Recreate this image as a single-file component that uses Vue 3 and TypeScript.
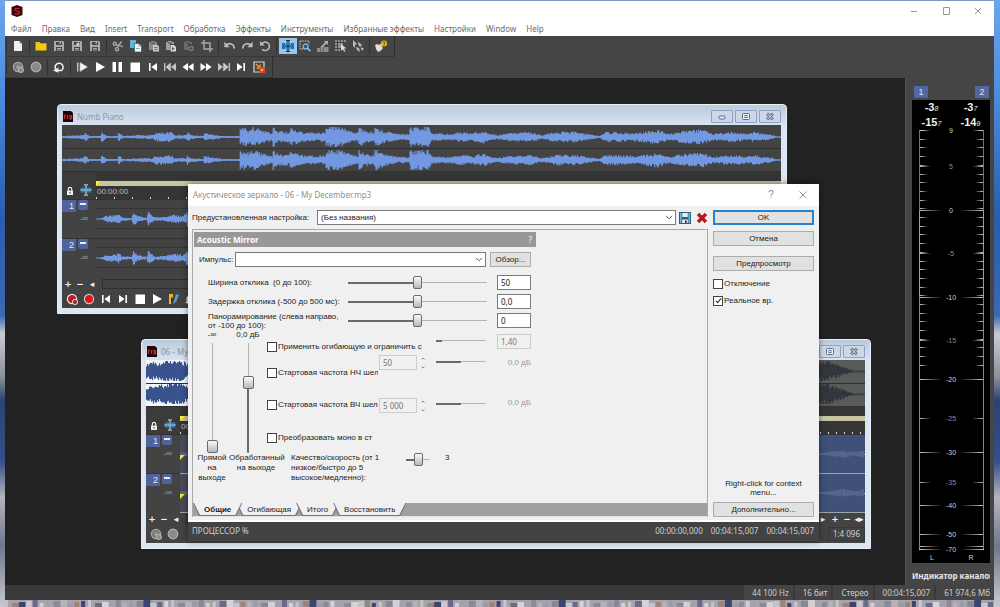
<script setup lang="ts">
import { reactive, ref } from 'vue'

type Point = [number, number]

const menu = ['Файл', 'Правка', 'Вид', 'Insert', 'Transport', 'Обработка', 'Эффекты', 'Инструменты', 'Избранные эффекты', 'Настройки', 'Window', 'Help']

const G = '#a9a9a9'
const W = '#f2f2f2'
const floppy = (c: string, extra = '') =>
  `<path fill="${c}" fill-rule="evenodd" d="M1 1h9l1 1v9H1zM3 2v3h6V2zM3 7v4h6V7z"/><path fill="${c}" d="M6.5 2h1.5v2H6.5zM4 8h4v1H4zM4 9.6h4v.8H4z"/>${extra}`
const clip = (c: string, extra: string) =>
  `<path fill="${c}" d="M1 2h2V1h4v1h2v2H5v6H1z" opacity=".7"/><path fill="#454545" d="M3 2.5h4v1H3z"/>${extra}`

const icons: Record<string, string> = {
  new: `<path fill="${W}" d="M2 1h5.5L10 3.5V11H2z"/><path fill="#8a8a8a" d="M7.5 1v2.5H10z"/>`,
  open: `<path fill="#f1cb0c" d="M.5 2h4l1 1.3h6V10.5H.5z"/><path fill="#c39d00" d="M.5 3.8h4.7l.8-.7h5.5v.8H.5z"/>`,
  save: floppy(G),
  saveAs: floppy(G, `<path fill="#dcdcdc" d="M5 4l3-1 1 1-3 2z"/>`),
  saveAll: floppy(G, `<path fill="${G}" d="M3 5h6v1H3z"/>`),
  cut: `<g fill="none" stroke="${G}" stroke-width="1.4"><circle cx="2.8" cy="3.8" r="1.6"/><circle cx="5" cy="9.2" r="1.6"/><path d="M4.2 4.6L11 6.6M5.2 7.6L9.5 1.5"/></g>`,
  copy: `<path fill="#5fb4dc" d="M0 0h6v8H0z"/><path fill="#f4f4f4" stroke="#3a3a3a" stroke-width=".6" d="M4.5 3.5h4.2l2.8 2.6V12h-7z"/><path fill="#5fb4dc" d="M6 8h3.5v1H6zM8.3 4.2v2.3h2.4z"/>`,
  paste: clip(G, `<path fill="#c9c9c9" d="M5 4.5h4l2 2V11.5H5z"/><path fill="#555" d="M6.2 7h3.5v.8H6.2zM6.2 9h3.5v.8H6.2z"/>`),
  pasteNew: clip('#c8c8c8', `<path fill="#d8d8d8" d="M5.5 5h3.5l2 2v4.5H5.5z"/><path fill="#555" d="M7 7l2.5 1.5L7 10.5z"/>`),
  pasteMix: clip('#7c7c7c', `<circle cx="8" cy="8.5" r="2.8" fill="#7c7c7c"/><path stroke="#454545" d="M8 6.8v3.4M6.3 8.5h3.4"/>`),
  crop: `<path fill="none" stroke="${G}" stroke-width="1.5" d="M3 0v9h9M0 3h9v9"/>`,
  undo: `<path fill="none" stroke="#bdbdbd" stroke-width="1.6" d="M2 5.2C5 2.6 10 3.2 10.4 8.6"/><path fill="#bdbdbd" d="M.4 1.8v5.4h5.3z"/>`,
  redo: `<path fill="none" stroke="#bdbdbd" stroke-width="1.6" d="M10 5.2C7 2.6 2 3.2 1.6 8.6"/><path fill="#bdbdbd" d="M11.6 1.8v5.4H6.3z"/>`,
  repeat: `<path fill="none" stroke="#bdbdbd" stroke-width="1.5" d="M2.6 4.2A4.2 4.2 0 1 1 3.2 9.2"/><path fill="#bdbdbd" d="M1 1v4.6h4.6z"/>`,
  edit: `<path fill="#1873b4" d="M0 3h3v6H0zM3.8 2.5h1v7h-1zM7.2 2.5h1v7h-1zM9 3h3v6H9z"/><path fill="#1873b4" d="M2 5h8v2.4H2z"/><path fill="none" stroke="#1b2d3c" stroke-width="1.1" d="M4 .6h1.4l.6.6.6-.6H8M6 1v10M4 11.4h1.4l.6-.6.6.6H8"/>`,
  zoom: `<path fill="none" stroke="#d2d2d2" stroke-width="1" stroke-dasharray="1.4 1" d="M1 1h9v3M1 1v8h3"/><circle cx="6.6" cy="6.4" r="2.5" fill="#3a5468" stroke="#7cc0ea" stroke-width="1.2"/><path stroke="#7cc0ea" stroke-width="1.8" d="M8.4 8.2l3 3"/>`,
  event: `<path fill="#8d8d8d" d="M0 8h3v4H0zM3.5 6h3v6h-3zM7 7h4.5v5H7z"/><path fill="#b0b0b0" d="M4 6.5L8.2 2.2 6.8 1H11v4L9.5 3.4 5.4 7.6z"/>`,
  select: `<path fill="#8f8f8f" d="M0 0h2v2H0zM3 0h2v2H3zM6 0h2v2H6zM9 0h2v2H9zM0 3h2v2H0zM0 6h2v2H0zM0 9h2v2H0zM3 9h2v2H3zM3 3h5v5H3z"/><path fill="#d8d8d8" d="M6 4l5.5 4.4-2.6.2 1.4 2.6-1.2.6-1.3-2.6L6 11z"/>`,
  pencil: `<path fill="#b9b9b9" d="M1 0l4 4-2 1v3L1 6zM6 1.5L10 5 8 7l-1.5-2zM4 7l3 1 1 4-3-2zM8.5 7.5L12 8l-2 3z"/>`,
  help: `<path fill="#e3e0d2" d="M0 5l2-1 2 1 3-2 1.5 1-2 2 1.5 2-2 2.5-3 1.5L1 9z"/><circle cx="9" cy="3.5" r="3" fill="#e9bf12"/><path fill="none" stroke="#5c4a00" d="M7.8 2.8C8 1.4 10.4 1.6 10 3l-1 1v.6M9 5.2v.8"/>`,
  recSet: `<circle cx="6" cy="6" r="4.6" fill="#777" stroke="#a9a9a9" stroke-width="1.3"/><circle cx="6" cy="6" r="2" fill="#999"/><circle cx="9" cy="9" r="2.6" fill="#8a8a8a" stroke="#c4c4c4" stroke-width=".8"/>`,
  rec: `<circle cx="6" cy="6" r="4.8" fill="#8a8a8a" stroke="#aeaeae" stroke-width="1.2"/>`,
  loop: `<path fill="none" stroke="${W}" stroke-width="1.5" d="M3 8.8A4 4 0 1 1 8.6 9.4H5"/><path fill="${W}" d="M0 9.4L5.4 6.4v5.4z"/>`,
  playAll: `<path fill="#bcbcbc" d="M1 1.5h1.5v9H1z"/><path fill="${W}" stroke="#bcbcbc" stroke-width=".6" d="M4 1.5L11.5 6 4 10.5z"/>`,
  play: `<path fill="#fff" d="M2 1l9 5-9 5z"/>`,
  pause: `<path fill="#fff" d="M1.5 1H5v10H1.5zM7.5 1H11v10H7.5z"/>`,
  stop: `<path fill="#fff" d="M1.5 1.5h9.5v9.5H1.5z"/>`,
  start: `<path fill="#fff" d="M2 2h1.6v8H2zM10 2v8L4.4 6z"/>`,
  prev: `<path fill="#c6c6c6" d="M0 2h1.3v8H0zM6 2v8L1.6 6zM6.2 2h.9v8h-.9zM12 2v8L7.2 6z"/>`,
  rew: `<path fill="#fff" d="M6 2v8L.5 6zM11.6 2v8L6 6z"/>`,
  fwd: `<path fill="#fff" d="M.5 2v8L6 6zM6 2v8l5.6-4z"/>`,
  next: `<path fill="#c6c6c6" d="M12 2h-1.3v8H12zM6 2v8l4.6-4zM5.8 2h-.9v8h.9zM0 2v8l4.8-4z"/>`,
  end: `<path fill="#fff" d="M10 2H8.4v8H10zM2 2v8l5.6-4z"/>`,
  script: `<path fill="none" stroke="#d8d8d8" stroke-width="1.2" d="M11 6V1H1v10h5"/><path fill="none" stroke="#e6a030" stroke-width="1.5" d="M3 3l4 4M7.2 3.6v3.6H3.600"/><path fill="#e04a22" d="M6 6h6v6H6z"/><path fill="#ffb080" d="M8 8h2v2H8z"/>`,
  recRedSet: `<circle cx="6" cy="6" r="4.6" fill="#c01c1c" stroke="#e8e8e8" stroke-width="1.2"/><circle cx="9" cy="9" r="2.6" fill="#9b2a2a" stroke="#ececec" stroke-width=".9"/>`,
  recRed: `<circle cx="6" cy="6" r="4.6" fill="#e01616" stroke="#c9c9c9" stroke-width="1.2"/>`,
  brush: `<path fill="#e8b92c" d="M1 1h4v2L3 11H1z"/><path fill="#5a9bd0" d="M8 1l3 1-3 7-3 2z"/><path fill="#2b2b2b" d="M3 4l2 2-2 5z"/>`
}

const fileTools = [
  { cls: 'n1', items: [['new', 'Новый']] },
  { cls: 'n4', items: [['open', 'Открыть'], ['save', 'Сохранить'], ['saveAs', 'Сохранить как'], ['saveAll', 'Сохранить все']] },
  { cls: 'n6', items: [['cut', 'Вырезать'], ['copy', 'Копировать'], ['paste', 'Вставить'], ['pasteNew', 'Вставить в новый'], ['pasteMix', 'Смешать'], ['crop', 'Обрезать']] },
  { cls: 'n3', items: [['undo', 'Отменить'], ['redo', 'Вернуть'], ['repeat', 'Повторить']] },
  { cls: 'n5', items: [['edit', 'Правка'], ['zoom', 'Масштаб'], ['event', 'События'], ['select', 'Выделение'], ['pencil', 'Карандаш']] },
  { cls: 'n1', items: [['help', 'Справка']] }
]
const playTools = [
  { cls: 'n2', items: [['recSet', 'Параметры записи'], ['rec', 'Запись']] },
  { cls: 'n1', items: [['loop', 'Цикл']] },
  { cls: 'n11', items: [['playAll', 'Воспроизвести всё'], ['play', 'Воспроизвести'], ['pause', 'Пауза'], ['stop', 'Стоп'], ['start', 'В начало'], ['prev', 'Предыдущий'], ['rew', 'Назад'], ['fwd', 'Вперёд'], ['next', 'Следующий'], ['end', 'В конец'], ['script', 'Сценарий']] }
]

function envelope(points: Point[], x: number): number {
  for (let i = 1; i < points.length; i++) {
    const [x1, y1] = points[i]
    if (x <= x1) {
      const [x0, y0] = points[i - 1]
      return y0 + ((y1 - y0) * (x - x0)) / Math.max(1, x1 - x0)
    }
  }
  return points[points.length - 1][1]
}
function wave(points: Point[], centre: number, seed: number, max = 10): string {
  let s = seed
  const rnd = () => (s = (s * 16807) % 2147483647) / 2147483647
  const width = points[points.length - 1][0]
  let d = ''
  for (let x = 0; x < width; x++) {
    const e = envelope(points, x)
    const up = Math.max(0.4, Math.min(max, e * (0.55 + 0.55 * rnd())))
    const down = Math.max(0.4, Math.min(max, e * (0.55 + 0.55 * rnd())))
    d += `M${x + 0.5} ${(centre - up).toFixed(1)}V${(centre + down).toFixed(1)}`
  }
  return d
}

const numb: Point[] = [
  [0, 1], [20, 2], [23, 4], [27, 1], [38, 1], [39, 5], [45, 1], [55, 1], [56, 5], [61, 1], [80, 2], [90, 2], [93, 4], [109, 5], [112, 2],
  [124, 2], [125, 5], [129, 2], [141, 1], [142, 4], [155, 2], [160, 1], [177, 1], [178, 9], [187, 8], [190, 10], [196, 8], [201, 6], [210, 4],
  [211, 11], [216, 6], [227, 5], [228, 9], [240, 5], [254, 4], [263, 5], [264, 9], [270, 11], [283, 8], [290, 5], [296, 5], [297, 10],
  [302, 6], [312, 5], [313, 11], [322, 6], [336, 3], [347, 3], [348, 9], [366, 10], [370, 4], [385, 3], [401, 5], [410, 4], [421, 6], [435, 2],
  [446, 4], [468, 5], [480, 2], [495, 5], [515, 5], [538, 1], [543, 5], [575, 4], [596, 7], [608, 3], [621, 6], [641, 7], [651, 3],
  [673, 5], [685, 3], [693, 5], [711, 2], [716, 0], [720, 0]
]
const numbTrack: Point[] = [
  [0, 0], [6, 1], [9, 3], [20, 4], [22, 6], [25, 2], [35, 1], [37, 7], [41, 3], [50, 1], [52, 7], [58, 2], [66, 2], [78, 4], [86, 3], [92, 8], [685, 6]
]
const december: Point[] = [[0, 8], [8, 10], [14, 8], [20, 12], [28, 12], [33, 12], [41, 7], [640, 11], [680, 11], [688, 8], [694, 6], [704, 2], [712, 0], [720, 0]]
const decemberTrack: Point[] = [[0, 2], [600, 2], [640, 1], [655, 3], [664, 4], [672, 2], [684, 4]]

const docs = [
  {
    id: 'numb', title: 'Numb Piano', time: '00:00:00', scale: '',
    overview: [wave(numb, 12, 71), wave(numb, 35, 913)],
    track: [wave(numbTrack, 19, 31), wave(numbTrack, 19, 77)],
    tools: ['recRedSet', 'recRed', 'start', 'end', 'stop', 'play', 'brush', 'loop']
  },
  {
    id: 'december', title: '06 - My December.mp3', time: '00:00:00', scale: '1:4 096',
    overview: [wave(december, 11, 51), wave(december, 34, 413)],
    track: [wave(decemberTrack, 19, 15, 8), wave(decemberTrack, 19, 99, 8)],
    tools: ['recSet', 'rec']
  }
]
const captions = [
  ['Свернуть', '<rect x="3" y="5" width="6" height="3" rx="1"/>'],
  ['Развернуть', '<rect x="2.500" y="2.500" width="7" height="6" rx="1"/><rect x="5" y="4.500" width="2" height="2"/>'],
  ['Закрыть', '<path d="M3 2.500L9 8.500M9 2.500L3 8.500" stroke-width="3"/><path d="M3 2.500L9 8.500M9 2.500L3 8.500" stroke="#e8eef6" stroke-width="1"/>']
]

const majors = [
  { label: '9', y: 30 }, { label: '5', y: 66 }, { label: '0', y: 110 }, { label: '-5', y: 153 }, { label: '-10', y: 197 }, { label: '-15', y: 240 },
  { label: '-20', y: 279 }, { label: '-25', y: 318 }, { label: '-30', y: 352 }, { label: '-35', y: 382 }, { label: '-40', y: 405 },
  { label: '-50', y: 434 }, { label: '-70', y: 449 }
]
const bright = ['0', '-10', '-20', '-30', '-40', '-50', '-70']
const minors = Array.from({ length: 28 }, (_, i) => Math.round(30 + i * 8.7))

const levels = reactive([
  { id: 'width', label: 'Ширина отклика  (0 до 100):', value: 50, min: 0, max: 100, text: '50' },
  { id: 'delay', label: 'Задержка отклика (-500 до 500 мс):', value: 0, min: -500, max: 500, text: '0,0' },
  { id: 'pan', label: 'Панорамирование (слева направо, от -100 до 100):', value: 0, min: -100, max: 100, text: '0' }
])
const shelves = reactive([
  { id: 'env', label: 'Применить огибающую и ограничить с', on: false, spin: '', fill: 12, out: '1,40' },
  { id: 'low', label: 'Стартовая частота НЧ шел', on: false, spin: '50', fill: 50, out: '0,0 дБ' },
  { id: 'high', label: 'Стартовая частота ВЧ шел', on: false, spin: '5 000', fill: 50, out: '0,0 дБ' },
  { id: 'mono', label: 'Преобразовать моно в ст', on: false, spin: '', fill: 0, out: '' }
])
const pct = (v: number, min: number, max: number) => ({ '--p': `${((v - min) / (max - min)) * 100}%` })
const dry = ref(0)
const wet = ref(66)
const quality = ref(3)
const bypass = ref(false)
const realtime = ref(true)
const tabs = ['Общие', 'Огибающая', 'Итого', 'Восстановить']
const tab = ref('Общие')
const status = ['44 100 Hz', '16 бит', 'Стерео', '00:04:15,007', '61 974,6 Мб']
const city = ['#c4c3ca', '#85879a', '#d4d3d9', '#9a9aa8', '#666c88', '#b6b2b6', '#cac8ce', '#8d8a96', '#3c4474', '#a3a1ad', '#9c8478', '#d2d0d4']
const blocks = Array.from({ length: 150 }, (_, i) => ({ x: i * 7, w: 3 + ((i * 5) % 6), c: city[(i * 7 + (i % 5) * 3) % city.length], h: (i * 3) % 4 }))
</script>

<template>
  <div class="desktop">
    <main class="app">
      <header class="titlebar">
        <svg class="logo" viewBox="0 0 12 12" aria-hidden="true">
          <path fill="#3a060b" d="M6 0l5.500 2v8L6 12 .5 10V2z" />
          <path fill="none" stroke="#c8202c" stroke-width="1.200" d="M8.500 3.500H4.500L3.500 5l5 2-1 1.800H3.500" />
        </svg>
        <div class="wincontrols">
          <button aria-label="Свернуть"><svg viewBox="0 0 8 8"><path d="M1 4.500h6" /></svg></button>
          <button aria-label="Развернуть"><svg viewBox="0 0 8 8"><path d="M1.500 .5h6v7h-6z" /></svg></button>
          <button aria-label="Закрыть"><svg viewBox="0 0 8 8"><path d="M1 1l6 6M7 1L1 7" /></svg></button>
        </div>
      </header>
      <nav class="menu">
        <button v-for="m in menu" :key="m">{{ m }}</button>
      </nav>
      <div class="toolbars">
        <div class="toolbar">
          <div v-for="(g, i) in fileTools" :key="i" class="group" :class="g.cls">
            <button v-for="t in g.items" :key="t[0]" :aria-label="t[1]" :class="{ on: t[0] === 'edit' }">
              <svg viewBox="0 0 12 12" v-html="icons[t[0]]"></svg>
            </button>
          </div>
        </div>
        <div class="toolbar">
          <div v-for="(g, i) in playTools" :key="i" class="group" :class="g.cls">
            <button v-for="t in g.items" :key="t[0]" :aria-label="t[1]">
              <svg viewBox="0 0 12 12" v-html="icons[t[0]]"></svg>
            </button>
          </div>
        </div>
      </div>

      <div class="middle">
        <div class="workspace">
          <section v-for="d in docs" :key="d.id" class="doc" :class="d.id">
            <div class="doc-title">
              <svg class="doc-icon" viewBox="0 0 10 11" aria-hidden="true">
                <path fill="#1c0608" d="M0 0h8l2 2v9H0z" />
                <path fill="none" stroke="#d02630" stroke-width="1.200" d="M1.500 8V3.500M1.500 4.500h1.500M4.500 8V4M4.500 5h1M7 4.500h1.500V8H7z" />
              </svg>
              <h2>{{ d.title }}</h2>
              <button v-for="c in captions" :key="c[0]" :aria-label="c[0]">
                <svg viewBox="0 0 12 11" v-html="c[1]"></svg>
              </button>
            </div>
            <div class="doc-body">
              <svg class="overview" viewBox="0 0 720 46" preserveAspectRatio="none" aria-hidden="true">
                <template v-if="d.id === 'december'">
                  <linearGradient id="played" gradientUnits="userSpaceOnUse" x1="0" x2="720" y1="0" y2="0">
                    <stop offset=".9" stop-color="#38538e" /><stop offset=".9" stop-color="#33363f" />
                  </linearGradient>
                  <rect width="648" height="46" fill="#f4f6fa" />
                  <rect x="648" width="72" height="46" fill="#595a5a" />
                </template>
                <path class="axis" d="M0 12h720M0 35h720" />
                <path v-for="(p, i) in d.overview" :key="i" class="wave" :d="p" />
                <path class="split" d="M0 23.500h720" />
              </svg>
              <div class="ruler-row">
                <div class="ruler-head">
                  <svg viewBox="0 0 8 10" class="lock" aria-hidden="true"><path fill="#f0f0f0" d="M1 4.500h6V9H1z" /><path fill="none" stroke="#f0f0f0" stroke-width="1.200" d="M2.300 4.500V3a1.700 1.700 0 0 1 3.400 0v1.500" /><path stroke="#333" d="M4 6v1.500" /></svg>
                  <svg viewBox="0 0 12 12" class="ibeam" aria-hidden="true"><path fill="#2b86b8" d="M1 3.500h4v5H1zM7 3.500h4v5H7z" /><path fill="none" stroke="#e0e0e0" d="M4 .8h1.400L6 1.400 6.600.8H8M6 1v10M4 11.200h1.400l.6-.6.6.6H8" /><path stroke="#8cc8e8" d="M0 6h12" /></svg>
                </div>
                <div class="ruler">
                  <div class="loopbar"><svg viewBox="0 0 5 5"><path fill="#ffee22" d="M0 0h5L0 5z" /></svg></div>
                  <span>{{ d.time }}</span>
                </div>
              </div>
              <div v-for="n in 2" :key="n" class="track">
                <div class="track-head">
                  <b>{{ n }}</b>
                  <button :aria-label="`Свернуть дорожку ${n}`"></button>
                  <span>-∞</span>
                </div>
                <svg viewBox="0 0 685 39" preserveAspectRatio="none" aria-hidden="true">
                  <rect v-if="d.id === 'december'" width="685" height="39" fill="#3f5079" />
                  <rect v-if="d.id === 'december'" width="60" height="39" fill="#474a5b" />
                  <path v-if="d.id === 'numb'" class="grid" d="M0 8.500h685M0 28.500h685" />
                  <path v-if="d.id === 'december'" class="edge" d="M0 19.500h685M0 38.500h685" />
                  <path class="wave" :d="d.track[n - 1]" />
                  <path v-if="d.id === 'december'" fill="#f5e72a" d="M0 20h5l-5 5z" />
                </svg>
              </div>
              <div class="scroll-row">
                <button aria-label="Крупнее">+</button>
                <button aria-label="Мельче">−</button>
                <button aria-label="Влево">◂</button>
                <div class="scroll-thumb"></div>
                <button aria-label="Вправо">▸</button>
                <button aria-label="Увеличить">+</button>
                <button aria-label="Уменьшить">−</button>
                <button aria-label="По ширине">◂▸</button>
              </div>
              <div class="doc-tools">
                <button v-for="t in d.tools" :key="t" :aria-label="t"><svg viewBox="0 0 12 12" v-html="icons[t]"></svg></button>
                <output v-if="d.scale">{{ d.scale }}</output>
              </div>
            </div>
          </section>
        </div>

        <aside class="meters">
          <div class="chan"><button>1</button><button>2</button></div>
          <div class="meter">
            <div class="peaks"><b>-3<i>8</i></b><b>-3<i>7</i></b></div>
            <div class="peaks"><b>-15<i>7</i></b><b>-14<i>9</i></b></div>
            <svg viewBox="0 30 78 433" class="scale">
              <defs>
                <linearGradient id="fadeL"><stop offset="0" stop-color="#cfcfcf" /><stop offset="1" stop-color="#cfcfcf" stop-opacity="0" /></linearGradient>
                <linearGradient id="fadeR"><stop offset="0" stop-color="#cfcfcf" stop-opacity="0" /><stop offset="1" stop-color="#cfcfcf" /></linearGradient>
              </defs>
              <g v-for="y in minors" :key="y">
                <rect x="8" :y="y" width="8" height="1" fill="url(#fadeL)" /><rect x="63" :y="y" width="8" height="1" fill="url(#fadeR)" />
              </g>
              <g v-for="m in majors" :key="m.label">
                <rect x="7" :y="m.y" :width="bright.includes(m.label) ? 24 : 12" height="1" fill="url(#fadeL)" />
                <rect :x="bright.includes(m.label) ? 48 : 60" :y="m.y" :width="bright.includes(m.label) ? 24 : 12" height="1" fill="url(#fadeR)" />
                <text x="39" :y="m.y + 3" :class="{ dim: !bright.includes(m.label) && m.label !== '9' }">{{ m.label }}</text>
              </g>
              <rect x="7" y="446" width="20" height="1" fill="url(#fadeL)" /><rect x="52" y="446" width="20" height="1" fill="url(#fadeR)" />
              <g fill="none">
                <path stroke="#b8555a" d="M7.500 30V110M71.500 30V110" />
                <path stroke="#b89a62" d="M7.500 110V197M71.500 110V197" />
                <path stroke="#5f9d78" d="M7.500 197V449M71.500 197V449" />
              </g>
              <text x="20" y="460">L</text><text x="59" y="460">R</text>
            </svg>
          </div>
          <h3>Индикатор каналов</h3>
        </aside>
      </div>

      <footer class="status"><span v-for="s in status" :key="s">{{ s }}</span></footer>
    </main>

    <svg class="city" viewBox="0 0 1000 7" preserveAspectRatio="none" aria-hidden="true">
      <rect width="1000" height="7" fill="#a5a4ad" />
      <rect v-for="b in blocks" :key="b.x" :x="b.x" :y="b.h" :width="b.w" height="7" :fill="b.c" />
    </svg>

    <section class="dialog" role="dialog" aria-label="Акустическое зеркало">
      <div class="dlg-title">
        <h1>Акустическое зеркало - 06 - My December.mp3</h1>
        <button aria-label="Справка">?</button>
        <button aria-label="Закрыть"><svg viewBox="0 0 8 8"><path d="M.5.5l7 7M7.500.5l-7 7" /></svg></button>
      </div>
      <div class="dlg-body">
        <div class="left">
          <div class="preset">
            <label for="preset">Предустановленная настройка:</label>
            <div class="combo">
              <select id="preset"><option>(Без названия)</option></select>
              <svg viewBox="0 0 8 5" aria-hidden="true"><path d="M1 .8L4 3.800 7 .8" /></svg>
            </div>
            <button class="ico" aria-label="Сохранить настройку"><svg viewBox="0 0 12 12"><path fill="#2d5f7c" d="M0 0h12v12H0z" /><path fill="#79b7d8" d="M1 1h1.500v10H1zM9.500 1H11v10H9.500z" /><path fill="#e6eef4" d="M3.200 1h5.600v4H3.200zM3.200 7.500h5.600V11H3.200z" /><path fill="#1c2f3c" d="M6 8.500h1.600V11H6z" /></svg></button>
            <button class="ico" aria-label="Удалить настройку"><svg viewBox="0 0 12 12"><path stroke="#b3181c" stroke-width="3.200" d="M2 2l8 8M10 2l-8 8" /></svg></button>
          </div>
          <div class="panel">
            <div class="fx">
              <div class="fx-head"><b>Acoustic Mirror</b><button aria-label="О плагине">?</button></div>
              <div class="impulse">
                <label for="impulse">Импульс:</label>
                <div class="combo">
                  <select id="impulse"><option></option></select>
                  <svg viewBox="0 0 8 5" aria-hidden="true"><path d="M1 .8L4 3.800 7 .8" /></svg>
                </div>
                <button class="btn">Обзор...</button>
              </div>
              <div v-for="l in levels" :key="l.id" class="param">
                <label :for="l.id">{{ l.label }}</label>
                <input :id="l.id" v-model.number="l.value" class="range" type="range" :min="l.min" :max="l.max" :style="pct(l.value, l.min, l.max)" />
                <input v-model="l.text" class="field" type="text" :aria-label="l.label" />
              </div>
              <div class="mix">
                <div class="fader">
                  <span>-∞</span>
                  <input id="dry" v-model.number="dry" class="vrange" type="range" min="0" max="100" :style="pct(dry, 0, 100)" />
                </div>
                <div class="fader">
                  <span>0,0 дБ</span>
                  <input id="wet" v-model.number="wet" class="vrange" type="range" min="0" max="100" :style="pct(wet, 0, 100)" />
                </div>
                <div class="shelves">
                  <div v-for="s in shelves" :key="s.id" class="shelf" :class="s.id">
                    <label class="check"><input v-model="s.on" type="checkbox" /><span>{{ s.label }}</span></label>
                    <div v-if="s.spin" class="spin">
                      <input class="field" type="text" disabled :value="s.spin" :aria-label="s.label" />
                      <svg viewBox="0 0 6 12" aria-hidden="true"><path d="M1.500 2.500L3 1l1.500 1.500M1.500 9.500L3 11l1.500-1.500" /></svg>
                    </div>
                    <input v-if="s.out" class="range mini" type="range" disabled :value="s.fill" :aria-label="`Уровень: ${s.label}`" :style="pct(s.fill, 0, 100)" />
                    <input v-if="s.id === 'env'" class="field" type="text" disabled :value="s.out" aria-label="Длина" />
                    <output v-else-if="s.out">{{ s.out }}</output>
                  </div>
                </div>
              </div>
              <div class="captions">
                <label for="dry">Прямой на выходе</label>
                <label for="wet">Обработанный на выходе</label>
                <label for="quality" class="q">Качество/скорость (от 1 низкое/быстро до 5 высокое/медленно):</label>
                <input id="quality" v-model.number="quality" class="range" type="range" min="1" max="5" :style="pct(quality, 1, 5)" />
                <output>{{ quality }}</output>
              </div>
            </div>
            <div class="tabs" role="tablist">
              <button v-for="t in tabs" :key="t" role="tab" :aria-selected="t === tab" :class="{ active: t === tab }" @click="tab = t"><span>{{ t }}</span></button>
            </div>
          </div>
        </div>
        <div class="side">
          <button class="btn primary">OK</button>
          <button class="btn">Отмена</button>
          <button class="btn preview">Предпросмотр</button>
          <label class="check"><input v-model="bypass" type="checkbox" /><span>Отключение</span></label>
          <label class="check"><input v-model="realtime" type="checkbox" /><span>Реальное вр.</span></label>
          <p>Right-click for context menu...</p>
          <button class="btn">Дополнительно...</button>
        </div>
      </div>
      <div class="dlg-status"><span>ПРОЦЕССОР %</span><span>00:00:00,000</span><span>00:04:15,007</span><span>00:04:15,007</span></div>
    </section>
  </div>
</template>

<style>
body {
  margin: 0;
}
</style>

<style scoped>
.desktop {
  --ui: 'Noto Sans', 'Open Sans', sans-serif;
  --tahoma: 'Liberation Sans', 'Noto Sans', sans-serif;
  --digits: 'Noto Sans', 'Open Sans', sans-serif;
  position: relative;
  display: flex;
  flex-direction: column;
  box-sizing: border-box;
  min-height: 100vh;
  padding: 0 6px 0 5px;
  overflow: hidden;
  background: linear-gradient(#6ba5ea, #4f8fe0 14%, #2b5cae 36%, #3c68b4 52%, #c9cbd2 55%, #8e919e 62%, #2c4270 66%, #34508a 76%, #b5b5bd 82%, #70778c 90%, #c9c9cf);
  font: 8px/10px var(--tahoma);
  color: #1c1c1c;
}
.desktop *,
.desktop *::before,
.desktop *::after {
  box-sizing: border-box;
}
button,
input,
select {
  margin: 0;
  padding: 0;
  border: 0;
  background: none;
  color: inherit;
  font: inherit;
}
h1,
h2,
h3,
p {
  margin: 0;
  font: inherit;
}
svg {
  display: block;
}
.app {
  display: flex;
  flex: 1;
  flex-direction: column;
  border-top: 1px solid #8295bd;
  background: #454545;
}
.city {
  width: 100%;
  height: 7px;
}
.titlebar {
  display: flex;
  align-items: center;
  justify-content: space-between;
  height: 19px;
  padding-left: 6px;
  background: #fff;
}
.logo {
  width: 12px;
  height: 12px;
}
.wincontrols {
  display: flex;
}
.wincontrols button {
  display: grid;
  place-items: center;
  width: 32px;
  height: 19px;
}
.wincontrols svg,
.dlg-title svg {
  width: 8px;
  height: 8px;
  fill: none;
  stroke: #999;
}
.menu {
  display: flex;
  gap: 10px;
  height: 16px;
  padding: 3px 6px 0;
  background: #fff;
  color: #6c6c6c;
  font: 8px/12px var(--ui);
  white-space: nowrap;
}
.menu button {
  height: 12px;
}
.toolbars {
  display: flex;
  flex-direction: column;
  align-items: flex-start;
  height: 42px;
}
.toolbar {
  display: flex;
  gap: 5px;
  height: 21px;
  padding: 2px 4px;
  border-right: 1px solid #2e2e2e;
  border-bottom: 1px solid #383838;
}
.group {
  position: relative;
  display: grid;
  grid-auto-columns: 1fr;
  grid-auto-flow: column;
}
.group::before {
  position: absolute;
  top: 0;
  bottom: 0;
  left: -3px;
  width: 1px;
  background: #303030;
  content: '';
}
.n1 { width: 18px; }
.n2 { width: 36px; }
.n3 { width: 53px; }
.n4 { width: 72px; }
.n5 { width: 88px; }
.n6 { width: 107px; }
.n11 { width: 195px; }
.group button {
  display: grid;
  place-items: center;
}
.group svg {
  width: 12px;
  height: 12px;
}
.group .on {
  background: #9cc3ea;
}
.middle {
  display: flex;
  flex: 1;
}
.workspace {
  position: relative;
  flex: 1;
  background: #222;
}
.doc {
  position: absolute;
  padding: 0 5px 5px 4px;
  border: 1px solid #e9f0f8;
  border-radius: 4px 4px 0 0;
  background: linear-gradient(#bccadb, #dbe6f2 22px);
}
.numb {
  top: 26px;
  right: 118px;
  left: 52px;
}
.december {
  top: 261px;
  right: 34px;
  left: 136px;
}
.doc-title {
  display: flex;
  align-items: center;
  gap: 2px;
  height: 20px;
  padding-top: 3px;
}
.doc-icon {
  width: 10px;
  height: 11px;
  margin: 0 2px 0 1px;
}
.doc-title h2 {
  flex: 1;
  color: #8996a6;
  font: 8px/12px var(--ui);
}
.doc-title button {
  display: grid;
  place-items: center;
  width: 22px;
  height: 13px;
  border: 1px solid #8ea2c4;
  border-radius: 1px;
  background: #ccd8e8;
}
.doc-title button svg {
  width: 12px;
  height: 11px;
  fill: #eef2f8;
  stroke: #5d6c85;
}
.doc-body {
  background: #434343;
}
.overview {
  width: 100%;
  height: 46px;
}
.wave {
  stroke: #7398e2;
  stroke-width: 1.2;
}
.axis {
  stroke: #6c82b0;
  stroke-width: 1;
}
.split {
  stroke: #2f2f2f;
}
.grid {
  stroke: #343434;
}
.edge {
  stroke: #9aa7ae;
}
.december .overview .wave {
  stroke: url(#played);
}
.december .overview .axis {
  stroke: #3d4352;
}
.december .track .wave {
  stroke: #586589;
}
.ruler-row {
  display: grid;
  grid-template-columns: 34px 1fr;
  height: 28px;
}
.ruler-head {
  display: flex;
  align-items: flex-end;
  gap: 6px;
  padding: 0 0 3px 4px;
  border-top: 1px solid #2d2d2d;
  background: #3b3b3b;
}
.lock {
  width: 8px;
  height: 10px;
}
.ibeam {
  width: 12px;
  height: 12px;
}
.ruler {
  padding-top: 10px;
  background: #353535;
  color: #b9b9b9;
  line-height: 11px;
}
.ruler span {
  display: block;
  height: 13px;
  padding-left: 1px;
  background: repeating-linear-gradient(90deg, #d8d8d8 0 1px, transparent 1px 18px) bottom / 100% 2px no-repeat;
}
.december .ruler span {
  background-image: repeating-linear-gradient(90deg, #d8d8d8 0 1px, transparent 1px 8px);
}
.loopbar {
  height: 5px;
  background: #c6c6a2;
}
.loopbar svg {
  width: 5px;
  height: 5px;
}
.track {
  display: grid;
  grid-template-columns: 34px 1fr;
  height: 39px;
  border-top: 1px solid #333;
}
.track > svg {
  width: 100%;
  height: 39px;
}
.track-head {
  display: grid;
  grid-template-columns: 14px 10px;
  grid-template-rows: 12px 12px;
  gap: 0 2px;
}
.track-head b {
  padding-right: 2px;
  background: #4f639c;
  color: #e4e8f2;
  font-weight: 400;
  font-size: 9px;
  line-height: 12px;
  text-align: right;
}
.track-head button {
  height: 10px;
  border-radius: 2px;
  background: linear-gradient(#e8ecf5, #e8ecf5) 50% 3px / 6px 2px no-repeat #4f639c;
}
.track-head span {
  grid-column: 1 / 3;
  color: #a6a6a6;
  line-height: 14px;
  text-align: right;
}
.scroll-row {
  display: flex;
  align-items: center;
  height: 13px;
  color: #f0f0f0;
  font: bold 9px/12px 'DejaVu Sans', sans-serif;
}
.scroll-row button {
  width: 12px;
}
.scroll-thumb {
  flex: 1;
  height: 10px;
  margin-left: 4px;
  border: 1px solid #2f2f2f;
}
.doc-tools {
  display: flex;
  align-items: center;
  gap: 5px;
  height: 18px;
  padding-left: 4px;
}
.doc-tools svg {
  width: 12px;
  height: 12px;
}
.doc-tools output {
  margin-left: auto;
  padding: 1px 4px;
  border: 1px solid #383838;
  color: #cfcfcf;
  font-family: var(--digits);
}
.meters {
  display: flex;
  flex-direction: column;
  width: 89px;
  padding: 8px 4px 0 6px;
  border-left: 1px solid #525252;
}
.chan {
  display: flex;
  justify-content: space-between;
  padding: 0 1px 2px 2px;
}
.chan button {
  width: 14px;
  height: 12px;
  border-radius: 1px;
  background: #5368a3;
  color: #dfe5f2;
  font-size: 9px;
  line-height: 12px;
}
.meter {
  background: #000;
}
.peaks {
  display: grid;
  grid-template-columns: 1fr 1fr;
  height: 15px;
  color: #eee;
  font: bold 11px/14px 'Liberation Sans', sans-serif;
  text-align: center;
}
.peaks i {
  font: italic 7px/8px 'Liberation Sans', sans-serif;
}
.scale {
  width: 78px;
  height: 433px;
  margin: 0 auto;
  overflow: visible;
}
.scale text {
  fill: #d0d0d0;
  font: 7px 'Liberation Sans', sans-serif;
  text-anchor: middle;
}
.scale .dim {
  fill: #8c8c8c;
}
.meters h3 {
  padding: 7px 0 0;
  overflow: hidden;
  color: #e6e6e6;
  font: 700 8px/12px var(--ui);
  white-space: nowrap;
}
.status {
  display: flex;
  justify-content: flex-end;
  gap: 2px;
  height: 15px;
  background: #393939;
  color: #cdcdcd;
  font-family: var(--digits);
  line-height: 15px;
}
.status span {
  padding: 0 4px 0 8px;
  background: #444;
}
.dialog {
  position: absolute;
  top: 184px;
  right: 181px;
  left: 188px;
  background: #f0f0f0;
  box-shadow: 0 0 6px rgba(0, 0, 0, 0.5);
}
.dlg-title {
  display: flex;
  align-items: center;
  height: 22px;
  padding-left: 5px;
  background: #fff;
  color: #8f8f8f;
}
.dlg-title h1 {
  flex: 1;
  font: 8px/12px var(--ui);
}
.dlg-title button {
  display: grid;
  place-items: center;
  width: 32px;
  height: 22px;
  font-size: 10px;
}
.dlg-body {
  display: grid;
  grid-template-columns: 1fr 101px;
  gap: 5px;
  padding: 4px 5px 3px 4px;
  border-bottom: 2px solid #fff;
}
.left {
  display: flex;
  flex-direction: column;
}
.preset {
  display: flex;
  align-items: center;
  height: 15px;
}
.preset label {
  width: 125px;
  white-space: nowrap;
}
.combo {
  display: flex;
  flex: 1;
  align-items: center;
  height: 15px;
  border: 1px solid #7a7a7a;
  background: #fff;
}
.combo select {
  flex: 1;
  align-self: stretch;
  padding-left: 3px;
  appearance: none;
}
.combo svg {
  width: 8px;
  height: 5px;
  margin: 0 2px;
  fill: none;
  stroke: #555;
  pointer-events: none;
}
.ico {
  margin-left: 3px;
}
.ico + .ico {
  margin-left: 5px;
}
.ico svg {
  width: 12px;
  height: 12px;
}
.panel {
  display: flex;
  flex: 1;
  flex-direction: column;
  margin-top: 4px;
  border: solid #a8a8a8;
  border-width: 1px 1px 0;
}
.fx {
  width: 343px;
  padding: 2px 0 20px 1px;
}
.fx-head {
  display: flex;
  align-items: center;
  justify-content: space-between;
  height: 15px;
  padding: 0 4px 0 3px;
  background: #989898;
  color: #fff;
  font-family: var(--digits);
}
.impulse {
  display: flex;
  align-items: center;
  height: 15px;
  margin: 5px 5px 6px;
}
.impulse label {
  width: 36px;
}
.impulse .btn {
  width: 41px;
  margin-left: 4px;
}
.btn {
  height: 15px;
  border: 1px solid #adadad;
  background: #e1e1e1;
  line-height: 12px;
}
.primary {
  border: 2px solid #2482d0;
  line-height: 10px;
}
.param {
  display: grid;
  grid-template-columns: 140px 139px 34px;
  align-items: center;
  height: 19px;
  padding-left: 14px;
}
.param label {
  line-height: 9px;
  white-space: pre-wrap;
}
.param .range {
  width: 139px;
}
.param .field {
  margin-left: 10px;
}
.field {
  width: 34px;
  height: 15px;
  padding-left: 3px;
  border: 1px solid #7a7a7a;
  background: #fff;
  font-family: var(--digits);
}
.field:disabled {
  border-color: #ccc;
  background: #f0f0f0;
  color: #777;
}
.range {
  height: 13px;
  appearance: none;
  background:
    linear-gradient(#6a6a6a, #6a6a6a) 0 50% / var(--p) 2px no-repeat,
    linear-gradient(#b4b4b4, #b4b4b4) 0 50% / 100% 1px no-repeat;
}
.range::-webkit-slider-runnable-track {
  height: 13px;
}
.range::-webkit-slider-thumb {
  width: 9px;
  height: 13px;
  appearance: none;
  border: 1px solid #6b6b6b;
  border-radius: 2px;
  background: linear-gradient(#fafafa, #b8b8b8);
}
.mini {
  width: 50px;
}
.mini::-webkit-slider-thumb {
  visibility: hidden;
}
.vrange {
  width: 11px;
  height: 110px;
  appearance: none;
  background:
    linear-gradient(#6a6a6a, #6a6a6a) 50% 100% / 2px var(--p) no-repeat,
    linear-gradient(#b4b4b4, #b4b4b4) 50% 0 / 1px 100% no-repeat;
  direction: rtl;
  writing-mode: vertical-lr;
}
.vrange::-webkit-slider-runnable-track {
  width: 11px;
}
.vrange::-webkit-slider-thumb {
  width: 11px;
  height: 13px;
  appearance: none;
  border: 1px solid #6b6b6b;
  border-radius: 2px;
  background: linear-gradient(#fafafa, #b8b8b8);
}
.mix {
  display: grid;
  grid-template-columns: 34px 38px 1fr;
  padding-left: 1px;
}
.fader {
  display: flex;
  flex-direction: column;
  align-items: center;
  gap: 3px;
  white-space: nowrap;
}
.shelves {
  display: grid;
  grid-template-rows: 18px 26px 35px 30px;
  padding-top: 4px;
}
.shelf {
  display: grid;
  grid-template-columns: 112px 57px 50px 45px;
  align-items: end;
}
.shelf.env,
.shelf.low {
  align-items: start;
}
.shelf .check {
  align-self: end;
  grid-row: 1;
  grid-column: 1;
  width: 111px;
}
.shelf.env .check {
  grid-column: 1 / 3;
  width: 160px;
}
.shelf.low {
  padding-top: 3px;
}
.shelf.high .check,
.shelf.high .mini,
.shelf.high output {
  margin-bottom: 3px;
}
.shelf .mini {
  grid-row: 1;
  grid-column: 3;
}
.shelf > .field,
.shelf output {
  grid-row: 1;
  grid-column: 4;
  margin-left: 11px;
}
.shelf output {
  color: #9b9b9b;
  line-height: 15px;
  text-align: right;
}
.spin {
  display: flex;
  grid-row: 1;
  grid-column: 2;
  align-items: center;
  gap: 3px;
}
.spin .field {
  width: 38px;
}
.spin svg {
  width: 6px;
  height: 12px;
  fill: none;
  stroke: #8a8a8a;
}
.check {
  display: flex;
  align-items: center;
  gap: 1px;
  height: 10px;
  overflow: hidden;
  white-space: nowrap;
}
.check input {
  position: relative;
  flex: none;
  width: 10px;
  height: 10px;
  appearance: none;
  border: 1px solid #444;
  background: #fff;
}
.check input:checked::after {
  position: absolute;
  top: 0;
  left: 3px;
  width: 3px;
  height: 6px;
  border: solid #222;
  border-width: 0 1px 1px 0;
  transform: rotate(40deg);
  content: '';
}
.captions {
  display: flex;
  align-items: flex-start;
  padding-left: 1px;
  text-align: center;
}
.captions label {
  width: 34px;
}
.captions label + label {
  width: 54px;
}
.captions .q {
  width: 99px;
  margin: 0 16px 0 8px;
  text-align: left;
}
.captions .range {
  width: 24px;
}
.captions output {
  margin-left: 15px;
}
.tabs {
  display: flex;
  height: 14px;
  margin-top: auto;
  border-bottom: 1px solid #e4e4e4;
  background: #a0a0a0;
}
.tabs button {
  position: relative;
  padding: 0 11px;
  background: #777;
  clip-path: polygon(0 0, 100% 0, calc(100% - 6px) 100%, 6px 100%);
}
.tabs button + button {
  margin-left: -6px;
}
.tabs button::before {
  position: absolute;
  inset: 0 1px 1px;
  background: #f0f0f0;
  clip-path: polygon(0 0, 100% 0, calc(100% - 6px) 100%, 6px 100%);
  content: '';
}
.tabs span {
  position: relative;
}
.tabs .active {
  z-index: 1;
  font-weight: 700;
}
.side {
  display: flex;
  flex-direction: column;
}
.side .btn + .btn {
  margin-top: 6px;
}
.side .preview.btn {
  margin: 10px 0 8px;
}
.side .check + .check {
  margin-top: 7px;
}
.side p {
  margin: auto 8px 5px;
  line-height: 9px;
  text-align: center;
}
.dlg-status {
  display: flex;
  gap: 8px;
  height: 19px;
  padding: 0 5px 0 4px;
  background: #434343;
  color: #d0d0d0;
  font-family: var(--digits);
  line-height: 18px;
}
.dlg-status span:first-child {
  flex: 1;
}
</style>
